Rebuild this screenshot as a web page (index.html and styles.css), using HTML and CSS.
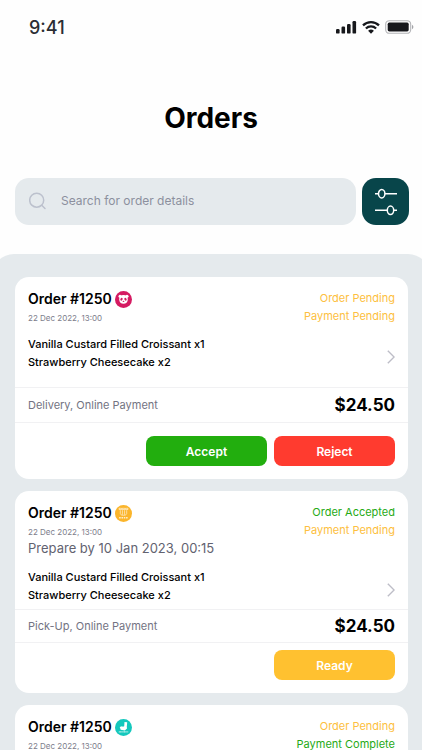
FILE: index.html
```html
<!DOCTYPE html>
<html lang="en">
<head>
<meta charset="utf-8">
<meta name="viewport" content="width=device-width, initial-scale=1">
<title>Orders</title>
<link rel="stylesheet" href="styles.css">
</head>
<body>
<div class="screen">
  <div class="status-bar">
    <span class="time">9:41</span>
    <div class="status-icons">
      <svg width="21" height="14" viewBox="0 0 21 14" fill="#17181c" aria-hidden="true"><rect x="0" y="9" width="3.600" height="4.600" rx="1.200"/><rect x="5.500" y="6.500" width="3.600" height="7.100" rx="1.200"/><rect x="11" y="4" width="3.600" height="9.600" rx="1.200"/><rect x="16.500" y="1" width="3.600" height="12.600" rx="1.200"/></svg>
      <svg width="18" height="14" viewBox="0 0 18 14" aria-hidden="true"><g fill="none" stroke="#17181c" stroke-width="2.300"><path d="M1 5.300a11.600 11.600 0 0 1 16 0"/><path d="M3.900 8.500a7.400 7.400 0 0 1 10.200 0"/></g><path d="M9 13.700 6.100 10.800a4.200 4.200 0 0 1 5.800 0z" fill="#17181c"/></svg>
      <svg width="29" height="14" viewBox="0 0 29 14" aria-hidden="true"><rect x=".7" y=".7" width="25" height="12.600" rx="3.600" fill="none" stroke="#b4b5b8" stroke-width="1.100"/><rect x="2.700" y="2.600" width="21" height="8.800" rx="1.600" fill="#17181c"/><path d="M27 4.800v4.400c1.900-.8 1.900-3.600 0-4.400z" fill="#a3a4a8"/></svg>
    </div>
  </div>

  <h1 class="page-title">Orders</h1>

  <form class="search-row">
    <label class="search">
      <svg width="18" height="18" viewBox="0 0 18 18" fill="none" stroke="#bcc1cd" stroke-width="1.500" stroke-linecap="round" aria-hidden="true"><circle cx="7.700" cy="8.200" r="7"/><path d="m13 13.500 3 3"/></svg>
      <input type="search" placeholder="Search for order details" aria-label="Search for order details">
    </label>
    <button class="filter" type="button" aria-label="Filter orders">
      <svg width="24" height="28" viewBox="0 0 24 28" fill="none" stroke="#fff" stroke-width="1.500" aria-hidden="true"><path d="M1 5.700h3.500M11 5.700h12M1 22.300h12M20 22.300h3"/><ellipse cx="7.700" cy="5.700" rx="3.200" ry="4.200"/><ellipse cx="16.500" cy="22.300" rx="3.200" ry="4.200"/></svg>
    </button>
  </form>

  <main class="panel">
    <article class="card">
      <header class="card-head">
        <div>
          <h2 class="order-title">Order #1250
            <svg width="17" height="17" viewBox="0 0 17 17" role="img" aria-label="Foodpanda"><circle cx="8.500" cy="8.500" r="8.500" fill="#d51b62"/><g fill="#fff"><circle cx="5" cy="5.300" r="1.500"/><circle cx="12" cy="5.300" r="1.500"/><path d="M8.500 4.100c3 0 4.300 1.900 4.300 4.300 0 2.700-1.900 4.400-4.300 4.400s-4.300-1.700-4.300-4.400c0-2.400 1.300-4.300 4.300-4.300z"/></g><g fill="#d51b62"><ellipse cx="6.500" cy="8.200" rx="1.100" ry="1.500" transform="rotate(30 6.500 8.200)"/><ellipse cx="10.500" cy="8.200" rx="1.100" ry="1.500" transform="rotate(-30 10.500 8.200)"/><ellipse cx="8.500" cy="10.300" rx=".9" ry=".6"/></g></svg>
          </h2>
          <p class="date">22 Dec 2022, 13:00</p>
        </div>
        <div class="states"><p class="pending">Order Pending</p><p class="pending">Payment Pending</p></div>
      </header>
      <div class="items">
        <ul><li>Vanilla Custard Filled Croissant x1</li><li>Strawberry Cheesecake x2</li></ul>
        <button class="open" type="button" aria-label="Open order"><svg width="8" height="14" viewBox="0 0 8 14" fill="none" stroke="#bdbdc7" stroke-width="1.400" aria-hidden="true"><path d="m.8.800 6.300 6.200-6.300 6.200"/></svg></button>
      </div>
      <div class="summary"><span>Delivery, Online Payment</span><strong>$24.50</strong></div>
      <div class="actions"><button class="btn accept" type="button">Accept</button><button class="btn reject" type="button">Reject</button></div>
    </article>

    <article class="card compact">
      <header class="card-head">
        <div>
          <h2 class="order-title">Order #1250
            <svg width="17" height="17" viewBox="0 0 17 17" role="img" aria-label="Restaurant pick-up"><circle cx="8.500" cy="8.500" r="8.500" fill="#fbb52b"/><g fill="none" stroke="#fff" stroke-opacity=".8" stroke-width=".7"><path d="M4 3.300h2.600v1.200H4zM7.200 3.300h2.600v1.200H7.200zM10.400 3.300H13v1.200h-2.600zM5.300 5.200v3.300l1.200 1.700h4l1.200-1.700V5.200M7.400 5.200v4.600M9.600 5.200v4.600"/><path d="M4.200 12.700h8.600" stroke-width="1.400" stroke-dasharray="1.500 .8"/></g></svg>
          </h2>
          <p class="date">22 Dec 2022, 13:00</p>
          <p class="prepare">Prepare by 10 Jan 2023, 00:15</p>
        </div>
        <div class="states"><p class="done">Order Accepted</p><p class="pending">Payment Pending</p></div>
      </header>
      <div class="items">
        <ul><li>Vanilla Custard Filled Croissant x1</li><li>Strawberry Cheesecake x2</li></ul>
        <button class="open" type="button" aria-label="Open order"><svg width="8" height="14" viewBox="0 0 8 14" fill="none" stroke="#bdbdc7" stroke-width="1.400" aria-hidden="true"><path d="m.8.800 6.300 6.200-6.300 6.200"/></svg></button>
      </div>
      <div class="summary"><span>Pick-Up, Online Payment</span><strong>$24.50</strong></div>
      <div class="actions"><button class="btn ready" type="button">Ready</button></div>
    </article>

    <article class="card">
      <header class="card-head">
        <div>
          <h2 class="order-title">Order #1250
            <svg width="17" height="17" viewBox="0 0 17 17" role="img" aria-label="Deliveroo"><circle cx="8.500" cy="8.500" r="8.500" fill="#14c8bd"/><path d="m9.500 3 2.700.2-.4 4.500.2 1.800-2.200 1.900-4.100-.7-1-2.800 2.300-.7.900.5 1.300-.5z" fill="#fff"/><path d="M3.800 12.900h9.400" stroke="#fff" stroke-opacity=".75" stroke-width="1.100" stroke-dasharray="1 .3"/></svg>
          </h2>
          <p class="date">22 Dec 2022, 13:00</p>
        </div>
        <div class="states"><p class="pending">Order Pending</p><p class="done">Payment Complete</p></div>
      </header>
    </article>
  </main>
</div>
</body>
</html>
```
FILE: styles.css
```css
* { box-sizing: border-box; margin: 0; padding: 0; }

body {
  background: #fefefe;
  color: #000;
  font-family: Inter, "Liberation Sans", sans-serif;
}

button, input { font: inherit; border: 0; }
button { cursor: pointer; }
svg { display: block; flex: none; }

.screen {
  display: flex;
  flex-direction: column;
  height: 100vh;
  overflow: hidden;
}

.status-bar {
  display: flex;
  justify-content: space-between;
  align-items: center;
  flex: none;
  height: 54px;
  padding: 0 8px 0 29px;
}
.time { font-size: 18px; font-weight: 500; color: #2b2d33; }
.status-icons { display: flex; gap: 5px; }

.page-title {
  flex: none;
  padding: 46px 0 42px;
  font-size: 28px;
  line-height: 36px;
  font-weight: 700;
  text-align: center;
}

.search-row {
  display: flex;
  flex: none;
  gap: 6px;
  padding: 0 13px 29px 15px;
}
.search {
  display: flex;
  flex: 1;
  align-items: center;
  gap: 14px;
  height: 47px;
  padding: 0 15px 2px 14px;
  border-radius: 14px;
  background: #e5eaed;
}
.search input {
  flex: 1;
  min-width: 0;
  background: transparent;
  color: #2b2d33;
  font-size: 12px;
  outline: none;
}
.search input::placeholder { color: #8c909e; opacity: 1; }
.filter {
  display: grid;
  place-items: center;
  width: 47px;
  height: 47px;
  border-radius: 14px;
  background: #08454a;
}

.panel {
  display: flex;
  flex: 1 0 auto;
  flex-direction: column;
  gap: 12px;
  margin: 0 -8px;
  padding: 23px 22px 12px 23px;
  border-radius: 22px 22px 0 0;
  background: #e5eaed;
}

.card {
  padding: 12px 0 13px;
  border-radius: 14px;
  background: #fff;
}
.card-head {
  display: flex;
  justify-content: space-between;
  padding: 0 13px;
}
.order-title {
  display: flex;
  align-items: center;
  gap: 3px;
  font-size: 14px;
  line-height: 20px;
  font-weight: 600;
}
.date {
  padding-top: 1px;
  color: #7d7d8b;
  font-size: 8px;
  line-height: 16px;
}
.prepare { color: #626270; font-size: 13px; line-height: 16px; }
.states {
  font-size: 11px;
  line-height: 18px;
  text-align: right;
}
.pending { color: #fdc040; }
.done { color: #26aa16; }

.items {
  display: flex;
  justify-content: space-between;
  align-items: flex-end;
  padding: 9px 13px 16px;
}
.items ul {
  list-style: none;
  font-size: 11px;
  line-height: 18px;
  font-weight: 500;
}
.open { padding: 8px 0 7px; background: transparent; }

.summary {
  display: flex;
  justify-content: space-between;
  align-items: center;
  height: 36px;
  padding: 0 13px;
  border: solid #f1f1f3;
  border-width: 1px 0;
  color: #737382;
  font-size: 11px;
}
.summary strong { color: #000; font-size: 17px; font-weight: 700; }

.actions {
  display: flex;
  justify-content: flex-end;
  gap: 7px;
  padding: 13px 13px 0;
}
.btn {
  width: 121px;
  height: 30px;
  border-radius: 8px;
  color: #fff;
  font-size: 12px;
  font-weight: 600;
}
.accept { background: #22ae0e; }
.reject { background: #ff3b2f; }
.ready { background: #ffc130; }

.compact .items { padding: 12px 13px 5px; }
.compact .summary { height: 34px; }
.compact .actions { padding-top: 7px; }
```
